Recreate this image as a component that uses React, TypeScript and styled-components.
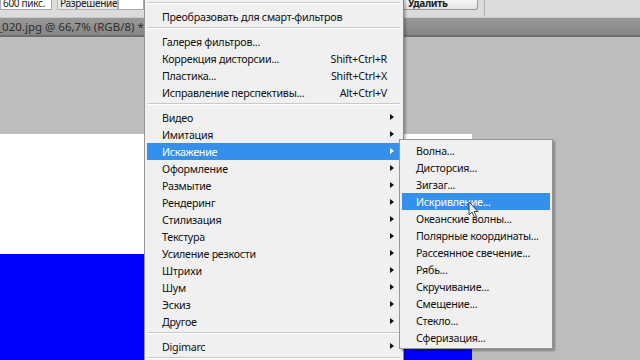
import styled, { createGlobalStyle } from 'styled-components';

const GlobalStyle = createGlobalStyle`
  html, body {
    margin: 0;
    padding: 0;
    overflow: hidden;
    background: #bebebe;
  }
`;

type Item =
  | { kind: 'sep' }
  | { kind: 'item'; label: string; shortcut?: string; sub?: boolean; active?: boolean };

const mainItems: Item[] = [
  { kind: 'sep' },
  { kind: 'item', label: 'Преобразовать для смарт-фильтров' },
  { kind: 'sep' },
  { kind: 'item', label: 'Галерея фильтров...' },
  { kind: 'item', label: 'Коррекция дисторсии...', shortcut: 'Shift+Ctrl+R' },
  { kind: 'item', label: 'Пластика...', shortcut: 'Shift+Ctrl+X' },
  { kind: 'item', label: 'Исправление перспективы...', shortcut: 'Alt+Ctrl+V' },
  { kind: 'sep' },
  { kind: 'item', label: 'Видео', sub: true },
  { kind: 'item', label: 'Имитация', sub: true },
  { kind: 'item', label: 'Искажение', sub: true, active: true },
  { kind: 'item', label: 'Оформление', sub: true },
  { kind: 'item', label: 'Размытие', sub: true },
  { kind: 'item', label: 'Рендеринг', sub: true },
  { kind: 'item', label: 'Стилизация', sub: true },
  { kind: 'item', label: 'Текстура', sub: true },
  { kind: 'item', label: 'Усиление резкости', sub: true },
  { kind: 'item', label: 'Штрихи', sub: true },
  { kind: 'item', label: 'Шум', sub: true },
  { kind: 'item', label: 'Эскиз', sub: true },
  { kind: 'item', label: 'Другое', sub: true },
  { kind: 'sep' },
  { kind: 'item', label: 'Digimarc', sub: true },
  { kind: 'sep' },
];

const distortItems = [
  'Волна...',
  'Дисторсия...',
  'Зигзаг...',
  'Искривление...',
  'Океанские волны...',
  'Полярные координаты...',
  'Рассеянное свечение...',
  'Рябь...',
  'Скручивание...',
  'Смещение...',
  'Стекло...',
  'Сферизация...',
];

function App() {
  return (
    <>
      <GlobalStyle />
      <Screen>
        <OptionsBar>
          <Field $width={52}>600 пикс.</Field>
          <Label>Разрешение:</Label>
          <Field $width={26} />
          <Spacer />
          <DeleteButton>Удалить</DeleteButton>
          <BarDivider />
        </OptionsBar>

        <TabBar>
          <Tab>
            _020.jpg @ 66,7% (RGB/8) *
            <CloseBox>x</CloseBox>
          </Tab>
        </TabBar>

        <Canvas>
          <Picture>
            <WhitePart />
            <BluePart />
          </Picture>
        </Canvas>

        <MainMenu>
          {mainItems.map((it, i) =>
            it.kind === 'sep' ? (
              <Separator key={i} />
            ) : (
              <MenuRow key={i} $active={it.active}>
                <span>{it.label}</span>
                {it.shortcut && <Shortcut>{it.shortcut}</Shortcut>}
                {it.sub && <Arrow $active={it.active} />}
              </MenuRow>
            )
          )}
        </MainMenu>

        <SubMenu>
          {distortItems.map((label) => (
            <SubRow key={label} $active={label === 'Искривление...'}>
              {label}
            </SubRow>
          ))}
        </SubMenu>

        <Cursor width="12" height="18" viewBox="0 0 12 18">
          <path
            d="M1 1 L1 14 L4 11 L6.5 16.5 L8.5 15.5 L6 10.5 L10 10.5 Z"
            fill="#ffffff"
            stroke="#222"
            strokeWidth="1"
            strokeLinejoin="round"
          />
        </Cursor>
      </Screen>
    </>
  );
}

const Screen = styled.div`
  position: relative;
  width: 640px;
  height: 360px;
  overflow: hidden;
  display: flex;
  flex-direction: column;
  font-family: 'Noto Sans', 'Open Sans', sans-serif;
  background: #bebebe;
`;

const OptionsBar = styled.div`
  height: 17px;
  flex-shrink: 0;
  display: flex;
  align-items: flex-start;
  background: #dcdcdc;
  border-bottom: 1px solid #c8c8c8;
  font-size: 10px;
  letter-spacing: -0.3px;
  color: #222;
`;

const Field = styled.div<{ $width: number }>`
  width: ${(p) => p.$width}px;
  height: 10px;
  background: #ffffff;
  border: 1px solid #a8a8a8;
  border-top: none;
  box-sizing: border-box;
  line-height: 6px;
  padding-left: 2px;
  white-space: nowrap;
  overflow: hidden;
`;

const Label = styled.div`
  width: 61px;
  height: 10px;
  margin-left: 5px;
  background: #e9e9e9;
  border: 1px solid #b5b5b5;
  border-top: none;
  box-sizing: border-box;
  line-height: 6px;
  padding-left: 2px;
  white-space: nowrap;
  overflow: hidden;
`;

const Spacer = styled.div`
  flex: 1;
`;

const DeleteButton = styled.div`
  width: 78px;
  height: 10px;
  box-sizing: border-box;
  background: linear-gradient(#f6f6f6, #e4e4e4);
  border: 1px solid #9a9a9a;
  border-top: none;
  border-radius: 0 0 3px 3px;
  line-height: 6px;
  padding-left: 7px;
  font-weight: 700;
  overflow: hidden;
`;

const BarDivider = styled.div`
  width: 1px;
  height: 16px;
  margin: 0 155px 0 6px;
  background: #b0b0b0;
`;

const TabBar = styled.div`
  height: 17px;
  flex-shrink: 0;
  display: flex;
  background: linear-gradient(#999999, #868686);
  border-bottom: 2px solid #6f6f6f;
`;

const Tab = styled.div`
  display: flex;
  align-items: center;
  gap: 6px;
  font-size: 11.5px;
  color: #2e2e2e;
  margin-left: -3px;
`;

const CloseBox = styled.span`
  width: 8px;
  height: 9px;
  font-size: 8px;
  line-height: 8px;
  text-align: center;
  color: #555;
  background: #a6a6a6;
  border: 1px solid #7a7a7a;
`;

const Canvas = styled.div`
  flex: 1;
  display: flex;
  padding-top: 97px;
  background: #bdbdbd;
`;

const Picture = styled.div`
  width: 472px;
  display: flex;
  flex-direction: column;
`;

const WhitePart = styled.div`
  height: 120px;
  background: #ffffff;
`;

const BluePart = styled.div`
  flex: 1;
  background: #0000ff;
`;

const MainMenu = styled.div`
  position: absolute;
  left: 144px;
  top: 0;
  width: 260px;
  box-sizing: border-box;
  padding: 0 2px;
  background: #f0f0f0;
  border-left: 1px solid #979797;
  border-right: 1px solid #8a8a8a;
  box-shadow: 2px 0 2px rgba(0, 0, 0, 0.25);
  font-size: 10.7px;
  letter-spacing: -0.25px;
  color: #111;
`;

const Separator = styled.div`
  height: 1px;
  margin: 2px 1px 4px;
  background: #c9c9c9;
  border-bottom: 1px solid #ffffff;
`;

const MenuRow = styled.div<{ $active?: boolean }>`
  position: relative;
  height: 17px;
  display: flex;
  align-items: center;
  padding: 0 12px 0 15px;
  background: ${(p) => (p.$active ? '#3590ec' : 'transparent')};
  color: ${(p) => (p.$active ? '#ffffff' : '#111')};
  margin-right: 2px;
`;

const Shortcut = styled.span`
  margin-left: auto;
`;

const Arrow = styled.span<{ $active?: boolean }>`
  position: absolute;
  right: 5px;
  top: 5px;
  width: 0;
  height: 0;
  border-top: 3.5px solid transparent;
  border-bottom: 3.5px solid transparent;
  border-left: 4px solid ${(p) => (p.$active ? '#ffffff' : '#111')};
`;

const SubMenu = styled.div`
  position: absolute;
  left: 399px;
  top: 139px;
  width: 154px;
  box-sizing: border-box;
  padding: 2px;
  background: #f0f0f0;
  border: 1px solid #979797;
  box-shadow: 2px 2px 2px rgba(0, 0, 0, 0.3);
  font-size: 10.7px;
  letter-spacing: -0.25px;
  color: #111;
`;

const SubRow = styled.div<{ $active?: boolean }>`
  height: 17px;
  display: flex;
  align-items: center;
  padding-left: 14px;
  background: ${(p) => (p.$active ? '#3590ec' : 'transparent')};
  color: ${(p) => (p.$active ? '#ffffff' : '#111')};
`;

const Cursor = styled.svg`
  position: absolute;
  left: 468px;
  top: 201px;
  opacity: 0.85;
`;

export default App;
